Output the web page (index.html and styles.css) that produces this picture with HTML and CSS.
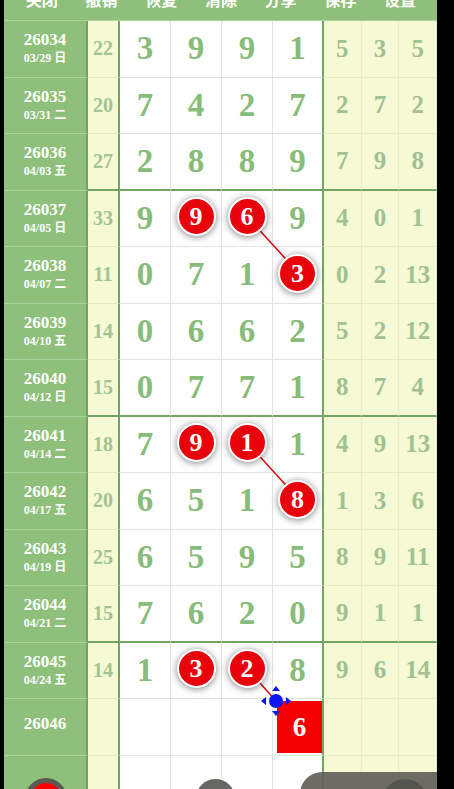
FILE: index.html
```html
<!DOCTYPE html>
<html lang="zh-CN">
<head>
    <meta charset="UTF-8">
    <meta name="viewport" content="width=device-width, initial-scale=1.0">
    <title>走势图</title>
    <link rel="stylesheet" href="styles.css">
</head>
<body>
    <div class="board">
        <div class="toolbar">
            <span class="tool">关闭</span>
            <span class="tool">撤销</span>
            <span class="tool">恢复</span>
            <span class="tool">清除</span>
            <span class="tool">分享</span>
            <span class="tool">保存</span>
            <span class="tool">设置</span>
        </div>

        <div class="grid">
            <div class="row">
                <div class="name"><b>26034</b><small>03/29 日</small></div>
                <div class="miss">22</div>
                <div class="cell">3</div><div class="cell">9</div><div class="cell">9</div><div class="cell last">1</div>
                <div class="stat">5</div><div class="stat">3</div><div class="stat">5</div>
            </div>
            <div class="row">
                <div class="name"><b>26035</b><small>03/31 二</small></div>
                <div class="miss">20</div>
                <div class="cell">7</div><div class="cell">4</div><div class="cell">2</div><div class="cell last">7</div>
                <div class="stat">2</div><div class="stat">7</div><div class="stat">2</div>
            </div>
            <div class="row group-end">
                <div class="name"><b>26036</b><small>04/03 五</small></div>
                <div class="miss">27</div>
                <div class="cell">2</div><div class="cell">8</div><div class="cell">8</div><div class="cell last">9</div>
                <div class="stat">7</div><div class="stat">9</div><div class="stat">8</div>
            </div>

            <div class="row">
                <div class="name"><b>26037</b><small>04/05 日</small></div>
                <div class="miss">33</div>
                <div class="cell">9</div><div class="cell"><span class="ball">9</span></div><div class="cell"><span class="ball">6</span></div><div class="cell last">9</div>
                <div class="stat">4</div><div class="stat">0</div><div class="stat">1</div>
            </div>
            <div class="row">
                <div class="name"><b>26038</b><small>04/07 二</small></div>
                <div class="miss">11</div>
                <div class="cell">0</div><div class="cell">7</div><div class="cell">1</div><div class="cell last"><span class="ball">3</span></div>
                <div class="stat">0</div><div class="stat">2</div><div class="stat">13</div>
            </div>
            <div class="row">
                <div class="name"><b>26039</b><small>04/10 五</small></div>
                <div class="miss">14</div>
                <div class="cell">0</div><div class="cell">6</div><div class="cell">6</div><div class="cell last">2</div>
                <div class="stat">5</div><div class="stat">2</div><div class="stat">12</div>
            </div>
            <div class="row group-end">
                <div class="name"><b>26040</b><small>04/12 日</small></div>
                <div class="miss">15</div>
                <div class="cell">0</div><div class="cell">7</div><div class="cell">7</div><div class="cell last">1</div>
                <div class="stat">8</div><div class="stat">7</div><div class="stat">4</div>
            </div>

            <div class="row">
                <div class="name"><b>26041</b><small>04/14 二</small></div>
                <div class="miss">18</div>
                <div class="cell">7</div><div class="cell"><span class="ball">9</span></div><div class="cell"><span class="ball">1</span></div><div class="cell last">1</div>
                <div class="stat">4</div><div class="stat">9</div><div class="stat">13</div>
            </div>
            <div class="row">
                <div class="name"><b>26042</b><small>04/17 五</small></div>
                <div class="miss">20</div>
                <div class="cell">6</div><div class="cell">5</div><div class="cell">1</div><div class="cell last"><span class="ball">8</span></div>
                <div class="stat">1</div><div class="stat">3</div><div class="stat">6</div>
            </div>
            <div class="row">
                <div class="name"><b>26043</b><small>04/19 日</small></div>
                <div class="miss">25</div>
                <div class="cell">6</div><div class="cell">5</div><div class="cell">9</div><div class="cell last">5</div>
                <div class="stat">8</div><div class="stat">9</div><div class="stat">11</div>
            </div>
            <div class="row group-end">
                <div class="name"><b>26044</b><small>04/21 二</small></div>
                <div class="miss">15</div>
                <div class="cell">7</div><div class="cell">6</div><div class="cell">2</div><div class="cell last">0</div>
                <div class="stat">9</div><div class="stat">1</div><div class="stat">1</div>
            </div>

            <div class="row">
                <div class="name"><b>26045</b><small>04/24 五</small></div>
                <div class="miss">14</div>
                <div class="cell">1</div><div class="cell"><span class="ball">3</span></div><div class="cell"><span class="ball">2</span></div><div class="cell last">8</div>
                <div class="stat">9</div><div class="stat">6</div><div class="stat">14</div>
            </div>
            <div class="row">
                <div class="name next"><b>26046</b></div>
                <div class="miss"></div>
                <div class="cell"></div><div class="cell"></div><div class="cell"></div><div class="cell last"><span class="pick">6</span></div>
                <div class="stat"></div><div class="stat"></div><div class="stat"></div>
            </div>
            <div class="row">
                <div class="name"></div>
                <div class="miss"></div>
                <div class="cell"></div><div class="cell"></div><div class="cell"></div><div class="cell last"></div>
                <div class="stat"></div><div class="stat"></div><div class="stat"></div>
            </div>
        </div>

        <!-- connectors between picked balls -->
        <svg class="links" width="433" height="789" viewBox="0 0 433 789">
            <g stroke="#d8101a" stroke-width="1.6">
                <line x1="243.5" y1="217" x2="294.5" y2="273"/>
                <line x1="243.5" y1="443" x2="294.5" y2="499"/>
                <line x1="243.5" y1="669" x2="272" y2="701"/>
            </g>
            <g fill="#0b16f0">
                <circle cx="272" cy="701" r="7"/>
                <path d="M272 686 l-4 5 h8 z"/>
                <path d="M272 716 l-4 -5 h8 z"/>
                <path d="M257 701 l5 -4 v8 z"/>
                <path d="M287 701 l-5 -4 v8 z"/>
            </g>
        </svg>
    </div>

    <div class="dock">
        <span class="fab fab-red"></span>
        <span class="fab fab-gray"></span>
        <div class="panel"><span class="fab fab-dark"></span></div>
    </div>
</body>
</html>
```

FILE: styles.css
```css
body {
    margin: 0;
    padding: 0;
    background: #000;
    height: 789px;
    overflow: hidden;
    position: relative;
    font-family: "Liberation Serif", "Noto Sans CJK SC", serif;
}

.board {
    position: relative;
    margin-left: 4px;
    width: 433px;
    height: 789px;
    overflow: hidden;
    background: #fff;
}

.toolbar {
    display: flex;
    height: 21px;
    padding-left: 8px;
    background: #8ec07c;
    border-bottom: 1px solid #a9d39b;
    box-sizing: border-box;
    overflow: hidden;
}

.tool {
    width: 59.7px;
    text-align: center;
    color: #fff;
    font-family: "Noto Sans CJK SC", sans-serif;
    font-weight: bold;
    font-size: 16px;
    line-height: 16px;
    margin-top: -9px;
}

.row {
    display: flex;
    height: 56.5px;
}

.row > div {
    box-sizing: border-box;
    display: flex;
    align-items: center;
    justify-content: center;
    font-weight: bold;
}

.name {
    width: 84px;
    flex-direction: column;
    background: #8ec07c;
    color: #fff;
    border-right: 2px solid #74a464;
    border-bottom: 1px solid #a9d39b;
}

.name b {
    font-size: 17px;
    line-height: 20px;
}

.name small {
    font-size: 12px;
    line-height: 17px;
}

.name.next b {
    margin-bottom: 6px;
}

.miss {
    width: 32px;
    background: #f5f9d4;
    color: #a4c393;
    font-size: 20px;
    border-right: 2px solid #74a464;
    border-bottom: 1px solid #e4ecc9;
}

.cell {
    width: 51px;
    background: #fff;
    color: #88bc7a;
    font-size: 33px;
    border-right: 1px solid #dde6da;
    border-bottom: 1px solid #dde6da;
}

.cell.last {
    border-right: 2px solid #74a464;
}

.stat {
    flex: 1;
    background: #f5f9d4;
    color: #a2c190;
    font-size: 25px;
    border-right: 1px solid #e4ecc9;
    border-bottom: 1px solid #e4ecc9;
}

.row.group-end .miss,
.row.group-end .cell,
.row.group-end .stat {
    border-bottom: 2px solid #74a464;
}

.ball {
    position: relative;
    z-index: 2;
    width: 35px;
    height: 35px;
    margin-top: -3px;
    border: 2px solid #fff;
    border-radius: 50%;
    background: #e8000b;
    color: #fff;
    font-size: 26px;
    line-height: 35px;
    text-align: center;
    box-shadow: 0 1px 7px rgba(0, 0, 0, 0.5);
}

.pick {
    width: 46px;
    height: 52px;
    margin-left: 4px;
    background: #f50000;
    color: #fff;
    font-size: 27px;
    line-height: 52px;
    text-align: center;
}

.links {
    position: absolute;
    left: 0;
    top: 0;
    z-index: 1;
    pointer-events: none;
}

.dock {
    position: absolute;
    left: 0;
    top: 772px;
    width: 437px;
    height: 17px;
}

.fab {
    position: absolute;
    width: 42px;
    height: 42px;
    border-radius: 50%;
    box-sizing: border-box;
}

.fab-red {
    left: 25px;
    top: 6px;
    background: #f00;
    border: 5px solid #5a5a55;
}

.fab-gray {
    left: 196px;
    top: 7px;
    width: 39px;
    height: 39px;
    background: #666662;
}

.panel {
    position: absolute;
    left: 300px;
    top: 0;
    width: 137px;
    height: 40px;
    border-radius: 22px 0 0 0;
    background: rgba(95, 95, 88, 0.92);
}

.fab-dark {
    left: 82px;
    top: 7px;
    width: 46px;
    height: 46px;
    background: #555550;
}
```
